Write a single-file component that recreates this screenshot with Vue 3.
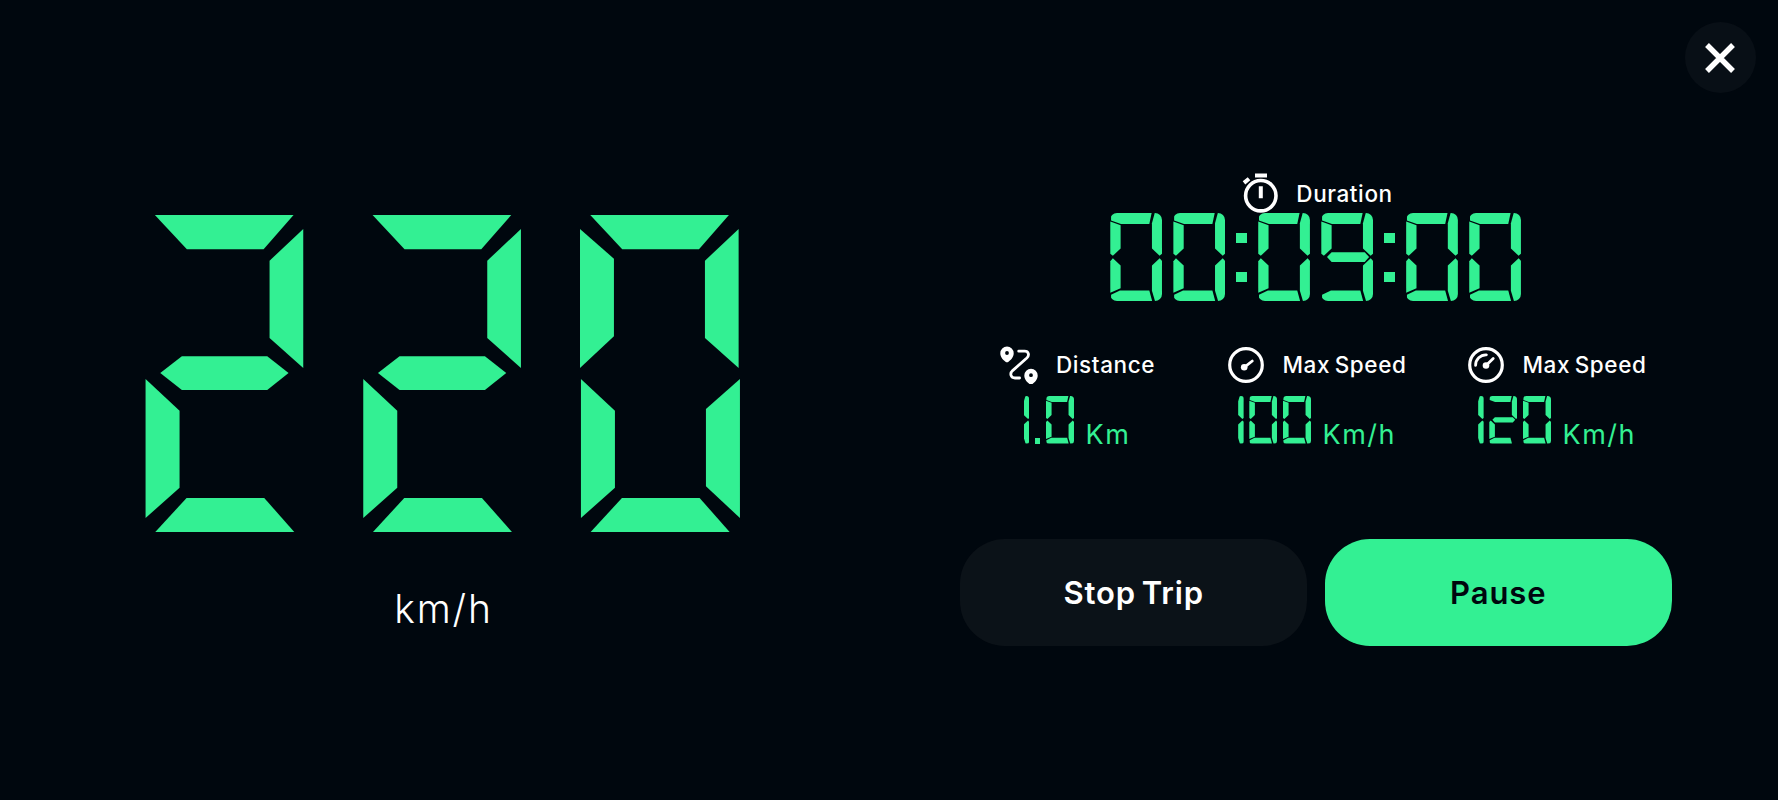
<template>
    <main class="trip">
        <button class="close" type="button" aria-label="Close">
            <svg viewBox="0 0 30 30" width="30" height="30">
                <path d="M2 2 28 28M28 2 2 28" stroke="#fff" stroke-width="5.4" />
            </svg>
        </button>

        <section class="speed">
            <div class="display display-speed" role="img" :aria-label="speed">
                <span v-for="(char, i) in speed" :key="i" class="digit">
                    <i v-for="s in SEGMENTS[char]" :key="s" class="seg" :class="'seg-' + s"></i>
                </span>
            </div>
            <p class="speed-unit">km/h</p>
        </section>

        <section class="details">
            <div class="label label-duration">
                <svg class="icon" viewBox="0 0 36 40" width="36" height="40" fill="none" stroke="#fff">
                    <circle cx="18.8" cy="22.7" r="15.2" stroke-width="3.6" />
                    <path d="M13 2.4h12M18.8 13.2v12M2 9.9l5-4.2" stroke-width="4" />
                </svg>
                <span class="label-text">Duration</span>
            </div>

            <div class="display display-timer" role="img" :aria-label="duration">
                <span v-for="(char, i) in duration" :key="i" :class="charClass(char)">
                    <i v-for="s in SEGMENTS[char]" :key="s" class="seg" :class="'seg-' + s"></i>
                </span>
            </div>

            <div class="stats">
                <div v-for="stat in stats" :key="stat.icon" class="stat">
                    <div class="label">
                        <svg v-if="stat.icon === 'route'" class="icon" viewBox="0 0 38 38" width="38" height="38">
                            <path
                                d="M18.7 5.2H24.6C28.8 5.2 29.6 9.4 26.8 12L12.6 24.6C9.4 27.6 10.8 32 15 32H19.6"
                                fill="none" stroke="#fff" stroke-width="2.8" stroke-linecap="round"
                            />
                            <path
                                v-for="pin in PINS" :key="pin" :transform="pin" fill="#fff" fill-rule="evenodd"
                                d="M0-6.8a6.7 6.7 0 0 1 6.7 6.7C6.7 4 3.6 7 1.5 8.3a2.6 2.6 0 0 1-3 0C-3.6 7-6.7 4-6.7-.1A6.7 6.7 0 0 1 0-6.8ZM0-2.3a1.9 1.9 0 1 0 0 3.8 1.9 1.9 0 0 0 0-3.8Z"
                            />
                        </svg>
                        <svg v-else class="icon" viewBox="0 0 36 36" width="36" height="36" fill="none" stroke="#fff">
                            <circle cx="18" cy="18" r="16.3" stroke-width="3.2" />
                            <g v-if="stat.icon === 'gauge'">
                                <circle cx="16.2" cy="20.3" r="3.3" fill="#fff" stroke="none" />
                                <path d="M16.2 20.3 24.3 14" stroke-width="2.8" stroke-linecap="round" />
                            </g>
                            <g v-else stroke-width="2.8" stroke-linecap="round">
                                <circle cx="18" cy="18.5" r="3.3" fill="#fff" stroke="none" />
                                <path d="M18 18.5 25.2 11.4M7.6 18.4A10.4 10.4 0 0 1 18.4 7.8" />
                            </g>
                        </svg>
                        <span class="label-text">{{ stat.label }}</span>
                    </div>
                    <div class="value">
                        <div class="display display-stat" role="img" :aria-label="stat.value">
                            <span v-for="(char, i) in stat.value" :key="i" :class="charClass(char)">
                                <i v-for="s in SEGMENTS[char]" :key="s" class="seg" :class="'seg-' + s"></i>
                            </span>
                        </div>
                        <span class="unit">{{ stat.unit }}</span>
                    </div>
                </div>
            </div>

            <div class="actions">
                <button class="btn btn-stop" type="button">Stop Trip</button>
                <button class="btn btn-pause" type="button">Pause</button>
            </div>
        </section>
    </main>
</template>

<script setup>
import { ref } from 'vue';

const speed    = ref('220');
const duration = ref('00:09:00');

const stats = ref([
    { icon: 'route',     label: 'Distance',  value: '1.0', unit: 'Km' },
    { icon: 'gauge',     label: 'Max Speed', value: '100', unit: 'Km/h' },
    { icon: 'gauge-arc', label: 'Max Speed', value: '120', unit: 'Km/h' },
]);

// lit segments per digit, a = top, then clockwise, g = middle
const SEGMENTS = {
    0: 'abcdef',
    1: 'bc',
    2: 'abdeg',
    3: 'abcdg',
    4: 'bcfg',
    5: 'acdfg',
    6: 'acdefg',
    7: 'abc',
    8: 'abcdefg',
    9: 'abcdfg',
};

const PINS = ['translate(7 7.4)', 'translate(31 29.6)'];

function charClass(char) {
    if (char === ':') return 'colon';
    if (char === '.') return 'point';
    return char === '1' ? 'digit digit-one' : 'digit';
}
</script>

<style>
body {
    margin: 0;
    background: #00070e;
}
</style>

<style scoped>
.trip {
    position: relative;
    display: grid;
    grid-template-columns: 885px 862px;
    height: 100vh;
    min-height: 800px;
    box-sizing: border-box;
    overflow: hidden;
    background: #00070e;
    color: #fff;
    font-family: Inter, "Liberation Sans", sans-serif;
}
.close {
    position: absolute;
    top: 22px;
    right: 22.5px;
    display: grid;
    place-items: center;
    width: 71px;
    height: 71px;
    padding: 0;
    border: 0;
    border-radius: 50%;
    background: #080f16;
}
.speed {
    display: flex;
    flex-direction: column;
    align-items: center;
    padding-top: 215px;
}
.speed-unit {
    margin: 51px 0 0 2px;
    font-size: 39px;
    font-weight: 350;
    line-height: 52px;
    letter-spacing: 1.8px;
}

/* segment displays */
.display {
    display: flex;
}
.digit {
    display: grid;
    justify-content: end;
    overflow: hidden;
    width: var(--w);
    height: var(--h);
}
.seg {
    grid-area: 1 / 1;
    width: var(--w);
    height: var(--h);
    background: #33f093;
}
.digit-one { width: calc(var(--w) * .2); }
.seg-a { clip-path: polygon(1.5% 8.5%, 1.5% 0, 80% 0, 75.5% 12.5%, 20.6% 12.5%); }
.seg-b { clip-path: polygon(86% 0, 100% 0, 100% 46.2%, 95.5% 48.5%, 80.6% 40.2%, 80.6% 11.7%); }
.seg-c { clip-path: polygon(95.5% 51.5%, 100% 54.2%, 100% 100%, 86.5% 100%, 80.6% 88.3%, 80.6% 59.8%); }
.seg-d { clip-path: polygon(1.5% 93%, 18.7% 88%, 75.5% 88%, 81% 100%, 1.5% 100%); }
.seg-e { clip-path: polygon(5% 51.5%, 20% 59.8%, 20% 85.6%, 0 90.5%, 0 54.8%); }
.seg-f { clip-path: polygon(0 9.8%, 20% 14%, 20% 40.2%, 5% 48.5%, 0 46.2%); }
.seg-g { clip-path: polygon(11% 50%, 20% 44.5%, 84% 44.5%, 92.5% 50%, 84% 55.6%, 20% 55.6%); }

.display-speed {
    --w: 160px;
    --h: 317px;
    gap: 57.7px;
    margin-left: -.5px;
}
.display-speed .seg-a { clip-path: polygon(10.3px 0, 149px 0, 119px 34.3px, 42.3px 34.3px); }
.display-speed .seg-b { clip-path: polygon(158.7px 14px, 158.7px 153px, 125px 123px, 125px 45.7px); }
.display-speed .seg-c { clip-path: polygon(160px 164px, 160px 303px, 126px 271.3px, 126px 194px); }
.display-speed .seg-d { clip-path: polygon(10.7px 317px, 42px 283px, 119.7px 283px, 149.7px 317px); }
.display-speed .seg-e { clip-path: polygon(1px 164px, 35px 195.7px, 35px 272.7px, 1px 303px); }
.display-speed .seg-f { clip-path: polygon(0 14px, 34px 43.7px, 34px 121.3px, 0 153px); }
.display-speed .seg-g { clip-path: polygon(15.7px 158px, 37.3px 141.3px, 122.7px 141.3px, 144px 158px, 122.7px 175px, 37.3px 175px); }

.display-timer {
    --w: 51.7px;
    --h: 88px;
    gap: 11.4px;
    margin-left: -.8px;
}
.display-timer .digit { border-radius: 7px; }
.display-stat {
    --w: 28px;
    --h: 47.5px;
    gap: 5.7px;
}
.display-stat .digit { border-radius: 3.5px; }
.colon {
    display: flex;
    flex-direction: column;
    justify-content: space-between;
    width: 10.4px;
    height: 49px;
    margin-top: 20px;
}
.colon::before,
.colon::after {
    content: "";
    height: 10.4px;
    background: #33f093;
}
.point {
    align-self: flex-end;
    width: 5.3px;
    height: 5.3px;
    background: #33f093;
}

/* right side */
.details {
    display: flex;
    flex-direction: column;
    align-items: center;
    padding-top: 173px;
}
.label {
    display: flex;
    align-items: center;
    justify-content: center;
    height: 38px;
    padding-left: 1px;
    font-size: 22.5px;
    font-weight: 450;
    line-height: 38px;
    letter-spacing: .6px;
    word-spacing: -2px;
    white-space: nowrap;
}
.label-duration {
    height: 40px;
    padding-left: 3px;
}
.label-duration .label-text {
    padding-top: 2px;
}
.icon {
    display: block;
    flex: none;
    margin-right: 18px;
}
.stats {
    display: grid;
    grid-template-columns: repeat(3, 240px);
    margin: 45px 0 0 2px;
}
.value {
    display: flex;
    align-items: flex-end;
    justify-content: center;
    margin-top: 12px;
    color: #33f093;
}
.unit {
    margin: 0 0 -7px 11.5px;
    font-size: 27px;
    line-height: 32px;
    letter-spacing: 1.5px;
}
.actions {
    display: flex;
    gap: 17.5px;
    margin-top: 95.5px;
}
.btn {
    width: 347px;
    height: 107px;
    padding: 0;
    border: 0;
    border-radius: 45px;
    font: 600 31px/1 Inter, "Liberation Sans", sans-serif;
    letter-spacing: .9px;
    word-spacing: -3px;
}
.btn-stop {
    background: #0b1218;
    color: #fff;
}
.btn-pause {
    background: #33f093;
    color: #00070e;
}
</style>
